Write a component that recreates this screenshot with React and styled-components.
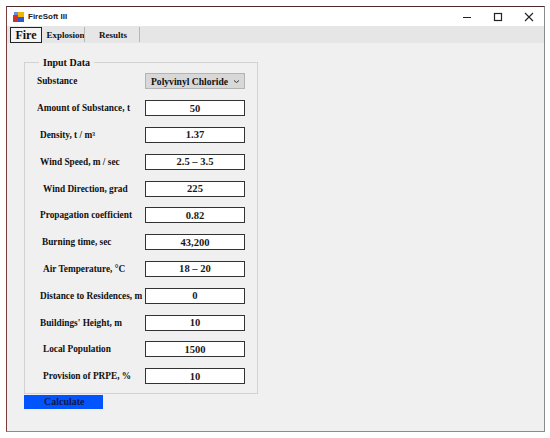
import React from 'react';
import styled, { createGlobalStyle } from 'styled-components';

const Global = createGlobalStyle`
  html, body { margin: 0; padding: 0; background: #ffffff; }
  body { width: 550px; height: 438px; overflow: hidden; }
`;

const rows = [
  { label: 'Amount of Substance, t', value: '50', indent: 0 },
  { label: 'Density, t / m³', value: '1.37', indent: 3 },
  { label: 'Wind Speed, m / sec', value: '2.5 – 3.5', indent: 3 },
  { label: 'Wind Direction, grad', value: '225', indent: 6 },
  { label: 'Propagation coefficient', value: '0.82', indent: 3 },
  { label: 'Burning time, sec', value: '43,200', indent: 5 },
  { label: 'Air Temperature, °C', value: '18 – 20', indent: 6 },
  { label: 'Distance to Residences, m', value: '0', indent: 3 },
  { label: "Buildings' Height, m", value: '10', indent: 3 },
  { label: 'Local Population', value: '1500', indent: 6 },
  { label: 'Provision of PRPE, %', value: '10', indent: 6 },
];

function Icon() {
  return (
    <svg width="11" height="10" viewBox="0 0 11 10">
      <rect x="0" y="3" width="5" height="7" fill="#d4302b" />
      <rect x="5" y="0" width="6" height="5" fill="#f2b705" />
      <rect x="5" y="5" width="6" height="5" fill="#2d5bd1" />
      <rect x="1" y="0" width="4" height="3" fill="#6a8fe0" />
    </svg>
  );
}

function App() {
  return (
    <>
      <Global />
      <Window>
        <TitleBar>
          <Icon />
          <Title>FireSoft III</Title>
          <Controls>
            <Ctrl>
              <svg width="10" height="10" viewBox="0 0 10 10"><line x1="1" y1="5.5" x2="9" y2="5.5" stroke="#222" strokeWidth="1" /></svg>
            </Ctrl>
            <Ctrl>
              <svg width="10" height="10" viewBox="0 0 10 10"><rect x="1.5" y="1.5" width="7" height="7" fill="none" stroke="#222" strokeWidth="1.2" /></svg>
            </Ctrl>
            <Ctrl>
              <svg width="10" height="10" viewBox="0 0 10 10"><path d="M1 1 L9 9 M9 1 L1 9" stroke="#222" strokeWidth="1.1" /></svg>
            </Ctrl>
          </Controls>
        </TitleBar>
        <TabBar>
          <Tab active>Fire</Tab>
          <Tab width={37}>Explosion</Tab>
          <Sep />
          <Tab width={52}>Results</Tab>
          <Sep />
        </TabBar>
        <Body>
          <Group>
            <Legend>Input Data</Legend>
            <Row>
              <Label>Substance</Label>
              <Select>
                <span>Polyvinyl Chloride</span>
                <svg width="7" height="5" viewBox="0 0 7 5"><path d="M1 1.5 L3.5 3.5 L6 1.5" fill="none" stroke="#333" strokeWidth="1" /></svg>
              </Select>
            </Row>
            {rows.map((r) => (
              <Row key={r.label}>
                <Label indent={r.indent}>{r.label}</Label>
                <Input>{r.value}</Input>
              </Row>
            ))}
          </Group>
          <CalcButton>Calculate</CalcButton>
        </Body>
      </Window>
    </>
  );
}

export default App;

const Window = styled.div`
  position: relative;
  margin: 6px 0 0 6px;
  width: 537px;
  height: 424px;
  border: 1px solid #8a8a8a;
  border-top-color: #4a2a2a;
  border-left-color: #7a3b3b;
  background: #f0f0f0;
  display: flex;
  flex-direction: column;
  font-family: "Liberation Serif", "Times New Roman", serif;
`;

const TitleBar = styled.div`
  height: 19px;
  background: #ffffff;
  display: flex;
  align-items: center;
  padding-left: 6px;
  gap: 4px;
`;

const Title = styled.span`
  font-family: "Liberation Sans", Arial, sans-serif;
  font-size: 8px;
  font-weight: bold;
  color: #222;
`;

const Controls = styled.div`
  margin-left: auto;
  display: flex;
  margin-right: 0;
`;

const Ctrl = styled.div`
  width: 31px;
  display: flex;
  justify-content: center;
  align-items: center;
`;

const TabBar = styled.div`
  height: 17px;
  background: #e6e6e6;
  display: flex;
  align-items: stretch;
  padding-left: 3px;
`;

const Tab = styled.div`
  display: flex;
  align-items: center;
  justify-content: center;
  font-weight: bold;
  color: #111;
  box-sizing: border-box;
  ${(p) =>
    p.active
      ? `
    font-size: 12px;
    width: 32px;
    border: 1px solid #222;
    background: #f4f4f4;
    margin: 1px 3px 0 0;
  `
      : `
    font-size: 9px;
    width: ${p.width}px;
    margin-left: 2px;
  `}
`;

const Sep = styled.div`
  width: 1px;
  background: #b8b8b8;
  margin: 1px 0;
`;

const Body = styled.div`
  flex: 1;
  padding: 14px 0 0 17px;
  display: flex;
  flex-direction: column;
  align-items: flex-start;
`;

const Group = styled.fieldset`
  margin: 0;
  min-width: 0;
  width: 234px;
  box-sizing: border-box;
  border: 1px solid #d2d2d2;
  padding: 0 12px 3px 12px;
  display: flex;
  flex-direction: column;
`;

const Legend = styled.legend`
  font-size: 10px;
  font-weight: bold;
  color: #111;
  padding: 0 4px;
  margin-left: 2px;
`;

const Row = styled.div`
  height: 26.8px;
  display: grid;
  grid-template-columns: 1fr 100px;
  align-items: center;
`;

const Label = styled.span`
  font-size: 9.3px;
  font-weight: bold;
  color: #111;
  white-space: nowrap;
  padding-left: ${(p) => p.indent || 0}px;
`;

const Input = styled.div`
  height: 16px;
  box-sizing: border-box;
  border: 1px solid #333;
  background: #fff;
  display: flex;
  align-items: center;
  justify-content: center;
  font-size: 10.6px;
  font-weight: bold;
  color: #1a1a1a;
`;

const Select = styled.div`
  height: 16px;
  box-sizing: border-box;
  border: 1px solid #b4b4b4;
  background: #d8d8d8;
  display: flex;
  align-items: center;
  justify-content: space-between;
  padding: 0 4px 0 5px;
  font-size: 9.6px;
  font-weight: bold;
  color: #111;
  white-space: nowrap;
`;

const CalcButton = styled.div`
  margin-top: 1px;
  width: 79px;
  height: 14px;
  background: #0055ff;
  color: #15154a;
  font-size: 10px;
  font-weight: bold;
  padding-left: 20px;
  box-sizing: border-box;
  display: flex;
  align-items: center;
`;
